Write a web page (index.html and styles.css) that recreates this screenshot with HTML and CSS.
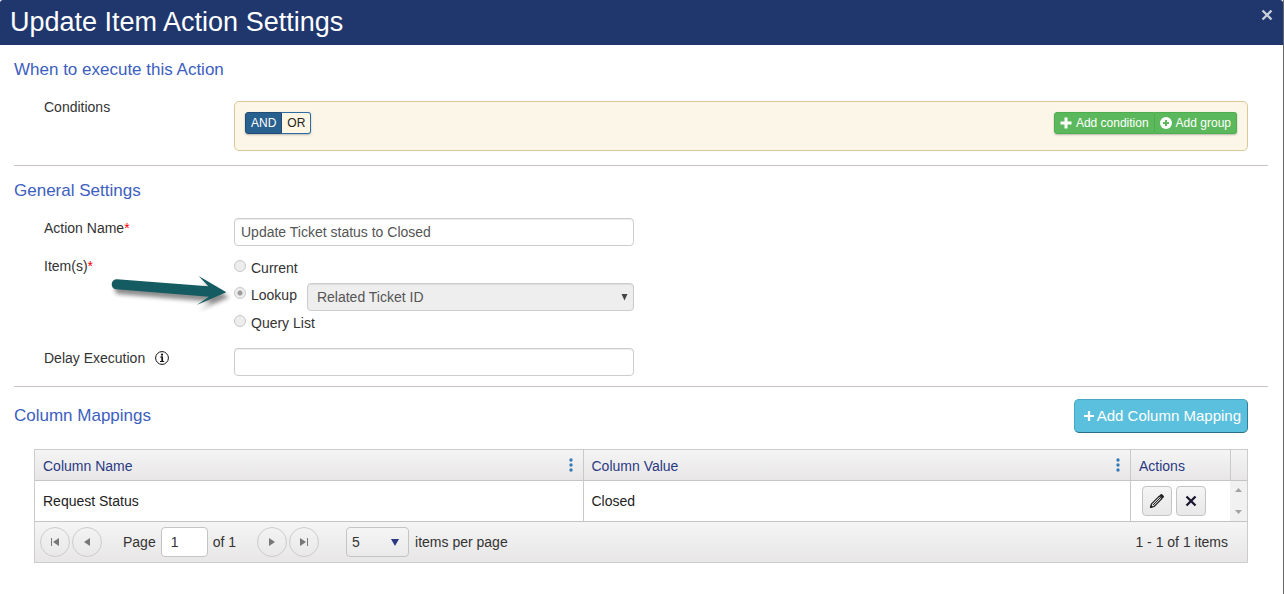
FILE: index.html
```html
<!DOCTYPE html>
<html lang="en">
<head>
<meta charset="utf-8">
<title>Update Item Action Settings</title>
<link rel="stylesheet" href="styles.css">
</head>
<body>
<div class="dialog">
  <header class="dialog-header">
    <h1>Update Item Action Settings</h1>
    <button class="close" type="button" aria-label="Close">
      <svg width="12" height="12" viewBox="0 0 12 12"><path d="M1.500 1.500l9 9M10.500 1.500l-9 9" stroke="currentColor" stroke-width="2.400"/></svg>
    </button>
  </header>
  <main>
    <section class="section">
      <h2>When to execute this Action</h2>
      <div class="fields conditions">
        <span class="label">Conditions</span>
        <div class="rule-group">
          <div class="toggle">
            <button class="on" type="button">AND</button><button type="button">OR</button>
          </div>
          <div class="rule-actions">
            <button type="button"><svg width="12" height="12" viewBox="0 0 12 12"><path d="M6 0.500v11M0.500 6h11" stroke="currentColor" stroke-width="3"/></svg>Add condition</button><button type="button"><svg width="12" height="12" viewBox="0 0 12 12"><circle cx="6" cy="6" r="6" fill="currentColor"/><path d="M6 3v6M3 6h6" stroke="#5cb85c" stroke-width="2"/></svg>Add group</button>
          </div>
        </div>
      </div>
    </section>

    <section class="section">
      <h2>General Settings</h2>
      <div class="fields">
        <label class="label" for="name">Action Name<span class="req">*</span></label>
        <input class="text" id="name" type="text" value="Update Ticket status to Closed">

        <span class="label" id="items">Item(s)<span class="req">*</span></span>
        <div class="options" role="radiogroup" aria-labelledby="items">
          <label class="option"><input type="radio" name="item" disabled>Current</label>
          <div class="lookup">
            <label class="option"><input type="radio" name="item" checked disabled>Lookup</label>
            <span class="select-wrap">
              <select class="select" aria-label="Lookup column" disabled><option>Related Ticket ID</option></select>
              <svg class="caret" width="7" height="7" viewBox="0 0 7 7"><path d="M0.500 0h6L3.500 6.500z" fill="currentColor"/></svg>
            </span>
          </div>
          <label class="option"><input type="radio" name="item" disabled>Query List</label>
          <svg class="arrow" width="160" height="80" viewBox="0 0 480 240">
            <path d="M51 73L325 94L296 63L379 112L290 150L327 125L49 103A15 15 0 0 1 51 73Z" fill="#145c62"/>
          </svg>
        </div>

        <label class="label" for="delay">Delay Execution
          <svg class="info" width="14" height="14" viewBox="0 0 14 14"><circle cx="7" cy="7" r="6.400" fill="none" stroke="currentColor" stroke-width="1"/><circle cx="7" cy="3.700" r="1.100" fill="currentColor"/><path d="M5.200 6h2.300M5 10.500h4.200" fill="none" stroke="currentColor" stroke-width="1"/><path d="M7.200 5.500v5" stroke="currentColor" stroke-width="1.700"/></svg>
        </label>
        <input class="text" id="delay" type="text">
      </div>
    </section>

    <section class="section mappings">
      <div class="section-head">
        <h2>Column Mappings</h2>
        <button class="add-mapping" type="button"><svg width="12" height="12" viewBox="0 0 12 12"><path d="M6 1v10M1 6h10" stroke="currentColor" stroke-width="2.200"/></svg>Add Column Mapping</button>
      </div>
      <div class="grid">
        <table>
          <colgroup><col><col><col class="col-actions"><col class="col-scroll"></colgroup>
          <thead>
            <tr>
              <th><div class="th">Column Name<button class="menu" type="button" aria-label="Column Name menu"><svg width="4" height="14" viewBox="0 0 4 14"><path d="M2 2v.01M2 7v.01M2 12v.01" stroke="currentColor" stroke-width="3.400" stroke-linecap="round"/></svg></button></div></th>
              <th><div class="th">Column Value<button class="menu" type="button" aria-label="Column Value menu"><svg width="4" height="14" viewBox="0 0 4 14"><path d="M2 2v.01M2 7v.01M2 12v.01" stroke="currentColor" stroke-width="3.400" stroke-linecap="round"/></svg></button></div></th>
              <th>Actions</th>
              <th></th>
            </tr>
          </thead>
          <tbody>
            <tr>
              <td>Request Status</td>
              <td>Closed</td>
              <td>
                <div class="row-actions">
                  <button type="button" aria-label="Edit"><svg width="16" height="16" viewBox="0 0 16 16"><path d="M1.500 14.500l1-3.600L10.300 3.100l2.600 2.600L5.100 13.500z" fill="#ddd" stroke="#222" stroke-width="1.200" stroke-linejoin="round"/><path d="M1 15l.9-3.200 2.300 2.300zM10.400 2.500l1.300-1.300q.7-.6 1.400 0l1.700 1.700q.6.7 0 1.400l-1.300 1.300z" fill="#222"/><path d="M4 12l7-7" stroke="#222" stroke-width="1"/></svg></button>
                  <button type="button" aria-label="Delete"><svg width="12" height="12" viewBox="0 0 12 12"><path d="M1.500 1.500l9 9M10.500 1.500l-9 9" stroke="#1c1730" stroke-width="2.300"/></svg></button>
                </div>
              </td>
              <td class="scroll">
                <div class="scroll-arrows">
                  <svg width="7" height="4" viewBox="0 0 7 4"><path d="M0 4h7L3.500 0z" fill="currentColor"/></svg>
                  <svg width="7" height="4" viewBox="0 0 7 4"><path d="M0 0h7L3.500 4z" fill="currentColor"/></svg>
                </div>
              </td>
            </tr>
          </tbody>
        </table>
        <nav class="pager" aria-label="Pages">
          <div class="pager-group">
            <button class="round" type="button" aria-label="First page"><svg width="8" height="8" viewBox="0 0 8 8"><path d="M.5 0v8" stroke="currentColor"/><path d="M8 0v8L2 4z" fill="currentColor"/></svg></button>
            <button class="round" type="button" aria-label="Previous page"><svg width="8" height="8" viewBox="0 0 8 8"><path d="M7 0v8L1 4z" fill="currentColor"/></svg></button>
          </div>
          <label class="page">Page <input type="text" value="1"> of 1</label>
          <div class="pager-group">
            <button class="round" type="button" aria-label="Next page"><svg width="8" height="8" viewBox="0 0 8 8"><path d="M1 0v8l6-4z" fill="currentColor"/></svg></button>
            <button class="round" type="button" aria-label="Last page"><svg width="8" height="8" viewBox="0 0 8 8"><path d="M7.500 0v8" stroke="currentColor"/><path d="M0 0v8l6-4z" fill="currentColor"/></svg></button>
          </div>
          <label class="size">
            <span class="select-wrap">
              <select><option>5</option></select>
              <svg class="caret" width="8" height="7" viewBox="0 0 8 7"><path d="M0 0h8L4 7z" fill="currentColor"/></svg>
            </span>
            items per page
          </label>
          <span class="total">1 - 1 of 1 items</span>
        </nav>
      </div>
    </section>
  </main>
</div>
</body>
</html>
```
FILE: styles.css
```css
* { box-sizing: border-box; }

body {
  margin: 0;
  background: #fff;
  color: #333;
  font: 14px/20px "Liberation Sans", Arial, sans-serif;
}

h1, h2 { margin: 0; font-weight: 400; }
button, input, select { font: inherit; color: inherit; margin: 0; }
button { padding: 0; border: 0; background: none; }
svg { display: block; flex: none; }

.dialog {
  min-height: 100vh;
  border-right: 1px solid #666;
}

.dialog-header {
  display: flex;
  justify-content: space-between;
  align-items: flex-start;
  padding: 6px 10px 7px;
  border-radius: 3px 3px 0 0;
  background: #20376e;
  color: #fff;
}
.dialog-header h1 { font-size: 27px; line-height: 32px; }
.close { padding-top: 3px; color: #c8cedb; }

main { padding: 0 15px 0 14px; }

.section { padding: 13px 0 10px; }
.section + .section { border-top: 1px solid #ccc2c4; }
.section h2 { color: #3c60c0; font-size: 17px; line-height: 24px; }
.mappings { padding-top: 12px; }

.fields {
  display: grid;
  grid-template-columns: 190px 1fr;
  row-gap: 10px;
  align-items: start;
  padding: 15px 20px 0 30px;
}
.req { color: #f00; }
.label .info {
  display: inline-block;
  margin-left: 6px;
  color: #111;
  vertical-align: -2px;
}

.conditions { padding-bottom: 4px; }
.rule-group {
  display: flex;
  justify-content: space-between;
  align-items: flex-start;
  min-height: 50px;
  margin-top: 4px;
  padding: 10px;
  border: 1px solid #dcc896;
  border-radius: 5px;
  background: #fcf6e9;
  font-size: 12px;
}
.toggle, .rule-actions { display: flex; border-radius: 3px; box-shadow: 0 1px 2px rgba(0, 0, 0, .25); }
.toggle button {
  height: 22px;
  padding: 0 5px;
  border: 1px solid #2e6da4;
  border-left: 0;
  border-radius: 0 3px 3px 0;
  background: #fff6e3;
  color: #222;
}
.toggle .on {
  border: 1px solid #204d74;
  border-radius: 3px 0 0 3px;
  background: #286090;
  color: #fff;
}
.rule-actions button {
  display: flex;
  align-items: center;
  gap: 4px;
  height: 22px;
  padding: 0 5px;
  border: 1px solid #4cae4c;
  border-radius: 3px 0 0 3px;
  background: #5cb85c;
  color: #fff;
}
.rule-actions button + button { border-left: 0; border-radius: 0 3px 3px 0; }

.text, .select {
  height: 28px;
  border: 1px solid #ccc;
  border-radius: 4px;
  background: #fff;
  box-shadow: inset 0 1px 1px rgba(0, 0, 0, .075);
  color: #555;
}
.text { width: 100%; max-width: 400px; padding: 0 6px; }

.options {
  position: relative;
  display: flex;
  flex-direction: column;
  max-width: 400px;
  padding: 2px 0 5px;
}
.option { display: flex; align-items: center; gap: 5px; }
.option input {
  appearance: none;
  width: 12px;
  height: 12px;
  margin-bottom: 4px;
  border: 1px solid #c8c8c8;
  border-radius: 50%;
  background: #ededed;
}
.option input:checked { background: radial-gradient(circle, #9c9c9c 0 2px, #ededed 3px); }
.lookup { display: flex; align-items: flex-start; gap: 10px; margin: 5px 0 2px; }
.lookup .option { padding-top: 2px; }
.lookup .select-wrap { flex: 1; }

.select-wrap { position: relative; display: block; }
.select { appearance: none; width: 100%; padding: 0 9px; background: #eee; opacity: 1; }
.caret {
  position: absolute;
  top: 50%;
  right: 6px;
  margin-top: -3px;
  color: #444;
  pointer-events: none;
}

/* Callout arrow that points at the Lookup option */
.arrow {
  position: absolute;
  top: -1px;
  left: -134px;
  filter: drop-shadow(3px 5px 2px rgba(0, 0, 0, .45));
  pointer-events: none;
}

.section-head {
  display: flex;
  justify-content: space-between;
  align-items: center;
  padding-right: 20px;
}
.add-mapping {
  display: flex;
  align-items: center;
  gap: 2px;
  height: 34px;
  padding: 0 6px 0 8px;
  border: 1px solid;
  border-color: #46a8c4 #2d7f98 #2d6f86 #46a8c4;
  border-radius: 5px;
  background: #5bc0de;
  color: #fff;
  font-size: 15px;
}

.grid { margin: 16px 20px 0; border: 1px solid #ccc; }
.grid table { width: 100%; border-collapse: separate; border-spacing: 0; table-layout: fixed; }
.col-actions { width: 100px; }
.col-scroll { width: 17px; }
.grid th, .grid td { padding: 0 8px; border-bottom: 1px solid #c4c4c4; text-align: left; }
.grid th + th, .grid td + td { border-left: 1px solid #c9c9c9; }
.grid th {
  height: 31px;
  padding-top: 2px;
  background: linear-gradient(#f5f5f5, #e8e6e7);
  color: #293a82;
  font-weight: 400;
}
.grid td { height: 41px; color: #222; }
.th { display: flex; justify-content: space-between; align-items: center; }
.menu { padding: 0 2px 2px; color: #337ab7; }
.row-actions { display: flex; gap: 4px; padding-left: 3px; }
.row-actions button {
  display: grid;
  place-items: center;
  width: 30px;
  height: 30px;
  border: 1px solid #c4c4c4;
  border-radius: 4px;
  background: linear-gradient(#f5f5f5, #e9e8e8);
}
.grid td.scroll { padding: 0; border-left: 0; background: #f1f1f1; color: #a3a3a3; }
.scroll-arrows {
  display: flex;
  flex-direction: column;
  align-items: center;
  gap: 18px;
}

.pager {
  display: flex;
  align-items: center;
  padding: 5px 19px 5px 5px;
  background: linear-gradient(#f5f5f5, #e8e6e7);
}
.pager-group { display: flex; gap: 2px; }
.round {
  display: grid;
  place-items: center;
  width: 30px;
  height: 30px;
  border: 1px solid #ccc;
  border-radius: 50%;
  color: #777;
}
.page { display: flex; align-items: center; gap: 5px; margin: 0 21px; }
.page input, .size select {
  height: 30px;
  border: 1px solid #c4c4c4;
  border-radius: 4px;
}
.page input { width: 47px; padding: 0 9px; background: #fff; }
.size { display: flex; align-items: center; gap: 6px; margin-left: 27px; }
.size select { appearance: none; width: 63px; padding: 0 5px; background: linear-gradient(#f5f5f5, #ebeaea); }
.size .caret { right: 10px; color: #293a82; }
.total { margin-left: auto; }
```
